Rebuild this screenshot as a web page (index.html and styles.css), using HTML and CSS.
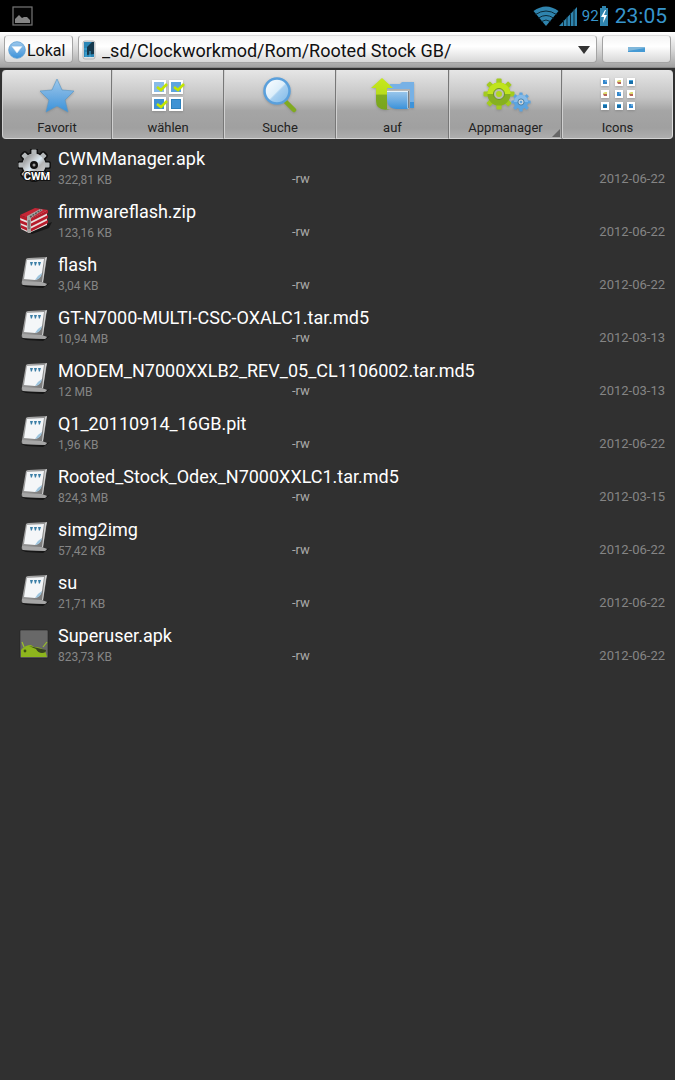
FILE: index.html
```html
<!DOCTYPE html>
<html lang="de">
<head>
<meta charset="utf-8">
<meta name="viewport" content="width=device-width, initial-scale=1">
<title>Dateimanager</title>
<link rel="stylesheet" href="styles.css">
</head>
<body>
<svg class="defs" width="0" height="0" aria-hidden="true">
  <defs>
    <linearGradient id="blue" x1="0" y1="0" x2="0" y2="1"><stop offset="0" stop-color="#9cc8ec"/><stop offset=".5" stop-color="#6fade2"/><stop offset="1" stop-color="#3a92da"/></linearGradient>
    <linearGradient id="green" x1="0" y1="0" x2="0" y2="1"><stop offset="0" stop-color="#c6ea1c"/><stop offset=".5" stop-color="#b9dc1c"/><stop offset=".55" stop-color="#80ac20"/><stop offset="1" stop-color="#78a41c"/></linearGradient>
    <linearGradient id="steel" x1="0" y1="0" x2="1" y2="1"><stop offset="0" stop-color="#777"/><stop offset=".35" stop-color="#c4c8cb"/><stop offset=".5" stop-color="#dceaf4"/><stop offset=".65" stop-color="#b4b4b4"/><stop offset="1" stop-color="#ddd"/></linearGradient>
    <linearGradient id="frame" x1="0" y1="0" x2="1" y2="1"><stop offset="0" stop-color="#b4b4b4"/><stop offset="1" stop-color="#6c6c6c"/></linearGradient>
    <linearGradient id="glass" x1="0" y1="0" x2="1" y2="1"><stop offset="0" stop-color="#fff"/><stop offset=".5" stop-color="#dceefa"/><stop offset=".55" stop-color="#a8d0f0"/><stop offset="1" stop-color="#7cb8e8"/></linearGradient>
    <g id="teeth">
      <rect x="-2.6" y="-15.500" width="5.2" height="31" rx="1"/>
      <rect x="-2.6" y="-15.500" width="5.2" height="31" rx="1" transform="rotate(45)"/>
      <rect x="-2.6" y="-15.500" width="5.2" height="31" rx="1" transform="rotate(90)"/>
      <rect x="-2.6" y="-15.500" width="5.2" height="31" rx="1" transform="rotate(135)"/>
      <circle r="11.500"/>
    </g>
    <symbol id="doc" viewBox="0 0 34 34">
      <path d="M3 30 24 31 32 28 25 33 8 32Z" fill="#161616"/>
      <path d="M8 4Q9 3 11 3L29 2 25 28 29 29 27 31 5 30Q3 29 4 26Z" fill="url(#frame)"/>
      <path d="M4 26 24 27 29 29 27 31 5 30Z" fill="#a6a6a6"/>
      <path d="M29 2 28 6 25 27 24 27 27 3Z" fill="#d2d2d2"/>
      <path d="M9 5 26 4 24 18Q22 24 17 25L6 24Z" fill="#f4f6f8"/>
      <path d="M24 18Q20 20 17 25Q23 24 24 18Z" fill="#9cc4de"/>
      <path d="M12 7h3l-1 3-1 1ZM16 7h3l-1 3-1 1ZM20 7h3l-1 3-1 1Z" fill="#3b7ea6"/>
    </symbol>
    <symbol id="tile-a" viewBox="0 0 8 8"><path d="M0 0h8v8H0Z" fill="#fff"/><path d="M2 2h4v4H2Z" fill="#3487cc"/><path d="M4 2h2v2H4Z" fill="#68abe0"/></symbol>
    <symbol id="tile-b" viewBox="0 0 8 8"><path d="M0 0h8v8H0Z" fill="#fff"/><path d="M2 3 4 2h2v2H2Z" fill="#dddc72"/><path d="M2 4h4v2H3Z" fill="#b56458"/></symbol>
    <symbol id="tile-c" viewBox="0 0 8 8"><path d="M0 0h8v8H0Z" fill="#fff"/><path d="M2 2h4v4H2Z" fill="#176ea8"/><path d="M2 2h4v1H2Z" fill="#49a6dd"/></symbol>
  </defs>
</svg>

<header class="status">
  <svg class="status-shot" viewBox="0 0 22 20" role="img" aria-label="Screenshot"><rect x="1" y="1" width="19" height="18" fill="#050505" stroke="#777" stroke-width="1.200"/><path d="M3 17v-4l4-4 3 3 2-1 3 0 3 3v3Z" fill="#858585"/></svg>
  <div class="status-right">
    <svg class="wifi" viewBox="0 0 26 20" role="img" aria-label="WLAN"><path d="M0.500 5Q13-4 25.500 5L13 20Z" fill="#2f84ae"/><path d="M2.500 8.500Q13 1.500 23.500 8.500M5.500 12Q13 7 20.500 12M8.500 15.500Q13 12.500 17.500 15.500" fill="none" stroke="#0b2a38" stroke-width="1"/></svg>
    <svg class="signal" viewBox="0 0 18 20" role="img" aria-label="Signal"><path d="M0 20 18 1V20Z" fill="#2f84ae"/><path d="M4.500 14v6M8 11v9M11.500 7v13M15 3v17" stroke="#0b2a38" stroke-width="1"/></svg>
    <span class="percent">92</span>
    <svg class="battery" viewBox="0 0 8 20" role="img" aria-label="Akku lädt"><path d="M2 0h4v2h2v18H0V2h2Z" fill="#2f84ae"/><path d="M5 4 1 11h3L3 17 7 9H4L6 4Z" fill="#fff"/></svg>
    <time class="clock">23:05</time>
  </div>
</header>

<nav class="pathbar">
  <button class="plate local" type="button"><svg class="local-icon" viewBox="0 0 18 18" aria-hidden="true"><circle cx="9" cy="9" r="8.300" fill="url(#blue)" stroke="#5a9dd0" stroke-width=".8"/><path d="M4 5.500h10L9 12Z" fill="#fff" stroke="#d6e6f2" stroke-width=".6"/></svg>Lokal</button>
  <label class="plate path">
    <svg class="phone" viewBox="0 0 14 20" aria-hidden="true"><rect x="1" y="1" width="12" height="18" rx="2" fill="#dde2e6" stroke="#aaa" stroke-width=".8"/><rect x="2" y="2" width="10" height="15" fill="#2a86b6"/><path d="M5 15V7l5-5h2v12Z" fill="#15384c"/><path d="M2 9h3M4 12v5M8 11v6" stroke="#45b0e0" stroke-width="1"/></svg>
    <select class="path-select" aria-label="Pfad"><option>_sd/Clockworkmod/Rom/Rooted Stock GB/</option></select>
    <svg class="arrow" viewBox="0 0 12 8" aria-hidden="true"><path d="M0 0h12L6 8Z" fill="#333"/></svg>
  </label>
  <button class="plate minus" type="button" aria-label="Leiste ausblenden"><svg class="minus-icon" viewBox="0 0 17 5" aria-hidden="true"><path d="M0 0h17v5H0Z" fill="#459ad4"/><path d="M0 0h17v1L0 4Z" fill="#80b7da"/></svg></button>
</nav>

<nav class="tools">
  <button class="tool" type="button"><svg class="tool-icon" viewBox="0 0 40 40" aria-hidden="true"><path d="M20 3 25 14 37 15 28 24 31 36 20 30 9 36 12 24 3 15 15 14Z" fill="url(#blue)" stroke="#5595c6" stroke-width=".6"/></svg>Favorit</button>
  <button class="tool" type="button"><svg class="tool-icon" viewBox="0 0 40 40" aria-hidden="true"><g fill="#5da5df" stroke="#fff" stroke-width="2"><rect x="5" y="5" width="12" height="12" fill="#88bce8"/><rect x="22" y="5" width="12" height="12"/><rect x="5" y="22" width="12" height="12" fill="#3f91d2"/><rect x="22" y="22" width="12" height="12" fill="#2d81bd"/></g><path d="M24 24h8v8h-8Z" fill="#3f93d4"/><path d="m9 11 4 3 6-6M26 11l4 3 6-6M9 28l4 3 6-6" fill="none" stroke="#c3e500" stroke-width="2.600"/></svg>wählen</button>
  <button class="tool" type="button"><svg class="tool-icon" viewBox="0 0 40 40" aria-hidden="true"><path d="m25 25 9 9" stroke="#80aa20" stroke-width="4.500" stroke-linecap="round"/><circle cx="17" cy="15" r="12.500" fill="url(#glass)" stroke="#5aa0dc" stroke-width="2.500"/></svg>Suche</button>
  <button class="tool" type="button"><svg class="tool-icon wide" viewBox="0 0 50 40" aria-hidden="true"><path d="M20 11 22 8h10l2-2h12v26h-4V13H20Z" fill="#77b1e5"/><path d="M42 26h4v6h-4Z" fill="#3d93da"/><path d="M3 12 14 2 25 12H19V33h4Q8 36 8 25V12Z" fill="url(#green)"/><path d="M19 15h21v18H29Q19 33 19 22Z" fill="url(#blue)"/><path d="M19 15.500h21v17" fill="none" stroke="#e7f3fa" stroke-width="1"/><path d="M40.500 15v17" stroke="#777e84"/></svg>auf</button>
  <button class="tool more" type="button"><svg class="tool-icon wide" viewBox="0 0 50 40" aria-hidden="true"><g transform="translate(18 18)"><use href="#teeth" fill="#a3cb20"/><path d="M-11.500 0A11.500 11.500 0 0 1 11.500 0Z" fill="#c0e41d"/><path d="M-11.500 0A11.500 11.500 0 0 0 11.500 0Z" fill="#86b020"/><circle r="5.500" fill="#b9bcb4" stroke="#6b9320"/><circle r="3" fill="#b0d61e"/></g><g fill="#5ca4df" transform="translate(40 26) scale(.62)"><use href="#teeth"/><path d="M-11.500 0A11.500 11.500 0 0 1 11.500 0Z" fill="#86bbe8"/><circle r="5" fill="#ccd5dc" stroke="#477c9f" stroke-width="1.500"/><circle r="2" fill="#5ca4df"/></g></svg>Appmanager</button>
  <button class="tool" type="button"><svg class="tool-icon" viewBox="0 0 40 40" aria-hidden="true"><use href="#tile-a" x="3" y="2" width="8" height="8"/><use href="#tile-b" x="17" y="2" width="8" height="8"/><use href="#tile-c" x="29" y="2" width="8" height="8"/><use href="#tile-b" x="3" y="14" width="8" height="8"/><use href="#tile-a" x="17" y="14" width="8" height="8"/><use href="#tile-b" x="29" y="14" width="8" height="8"/><use href="#tile-c" x="3" y="26" width="8" height="8"/><use href="#tile-c" x="17" y="26" width="8" height="8"/><use href="#tile-a" x="29" y="26" width="8" height="8"/></svg>Icons</button>
</nav>

<main>
<ul class="files">
  <li class="file"><svg class="file-icon" viewBox="0 0 34 34" aria-hidden="true"><g transform="translate(16 16)"><use href="#teeth" fill="#111" stroke="#111" stroke-width="3"/><use href="#teeth" fill="#b4b8ba"/><circle r="11" fill="url(#steel)"/><circle r="4" fill="#111"/><circle r="1.500" fill="#999"/></g><text class="cwm" x="19" y="31" text-anchor="middle">CWM</text></svg><a class="name" href="#">CWMManager.apk</a><span class="size">322,81 KB</span><span class="perm">-rw</span><span class="date">2012-06-22</span></li>
  <li class="file"><svg class="file-icon" viewBox="0 0 34 34" aria-hidden="true"><path d="M10 31 29 22 34 20 31 26 14 32Z" fill="#171717"/><path d="M2 14 12 17 29 8V23L11 31 3 27Z" fill="#eadfdf"/><path d="M2 13 17 6 30 8 12 17Z" fill="#c52535"/><path d="M2 13 12 17V20L2 16ZM2 18 12 22V25L2 21ZM3 23 12 27V30L3 26ZM12 17 30 8V11L12 20ZM12 22 30 13V16L12 25ZM12 27 30 18V21L12 30Z" fill="#b61c2b"/><path d="M9 14 22 7 25 8 13 16V31L9 30Z" fill="#aaa6a3"/><path d="m12 15 11-7" stroke="#555" stroke-width="1.500" stroke-dasharray="2 1"/><path d="M11 18v9" stroke="#555"/></svg><a class="name" href="#">firmwareflash.zip</a><span class="size">123,16 KB</span><span class="perm">-rw</span><span class="date">2012-06-22</span></li>
  <li class="file"><svg class="file-icon" aria-hidden="true"><use href="#doc"/></svg><a class="name" href="#">flash</a><span class="size">3,04 KB</span><span class="perm">-rw</span><span class="date">2012-06-22</span></li>
  <li class="file"><svg class="file-icon" aria-hidden="true"><use href="#doc"/></svg><a class="name" href="#">GT-N7000-MULTI-CSC-OXALC1.tar.md5</a><span class="size">10,94 MB</span><span class="perm">-rw</span><span class="date">2012-03-13</span></li>
  <li class="file"><svg class="file-icon" aria-hidden="true"><use href="#doc"/></svg><a class="name" href="#">MODEM_N7000XXLB2_REV_05_CL1106002.tar.md5</a><span class="size">12 MB</span><span class="perm">-rw</span><span class="date">2012-03-13</span></li>
  <li class="file"><svg class="file-icon" aria-hidden="true"><use href="#doc"/></svg><a class="name" href="#">Q1_20110914_16GB.pit</a><span class="size">1,96 KB</span><span class="perm">-rw</span><span class="date">2012-06-22</span></li>
  <li class="file"><svg class="file-icon" aria-hidden="true"><use href="#doc"/></svg><a class="name" href="#">Rooted_Stock_Odex_N7000XXLC1.tar.md5</a><span class="size">824,3 MB</span><span class="perm">-rw</span><span class="date">2012-03-15</span></li>
  <li class="file"><svg class="file-icon" aria-hidden="true"><use href="#doc"/></svg><a class="name" href="#">simg2img</a><span class="size">57,42 KB</span><span class="perm">-rw</span><span class="date">2012-06-22</span></li>
  <li class="file"><svg class="file-icon" aria-hidden="true"><use href="#doc"/></svg><a class="name" href="#">su</a><span class="size">21,71 KB</span><span class="perm">-rw</span><span class="date">2012-06-22</span></li>
  <li class="file"><svg class="file-icon" viewBox="0 0 34 34" aria-hidden="true"><rect x="2" y="4" width="28" height="28" rx="1" fill="#686868" stroke="#222" stroke-width=".6"/><path d="M3 31V24Q7 19 13 19L16 21Q27 20 29 31Z" fill="#8db51d"/><path d="m6 21-2-5M25 21l4-5" stroke="#9bc229" stroke-width="1.200"/><path d="m11 20 17 4q0 3-4 3-4 0-6-4Z" fill="#384520"/><circle cx="7" cy="25" r="1.400" fill="#3f5214"/></svg><a class="name" href="#">Superuser.apk</a><span class="size">823,73 KB</span><span class="perm">-rw</span><span class="date">2012-06-22</span></li>
</ul>
</main>
</body>
</html>
```
FILE: styles.css
```css
* { box-sizing: border-box; }
body {
  margin: 0;
  min-height: 100vh;
  background: #303030;
  color: #fff;
  font-family: Roboto, "Noto Sans", sans-serif;
}
svg { display: block; flex: none; }
button, select { font: inherit; color: inherit; margin: 0; }
.defs { position: absolute; }

.status {
  display: flex;
  align-items: center;
  justify-content: space-between;
  height: 32px;
  padding: 0 8px 0 12px;
  background: #000;
  color: #3795cc;
}
.status-shot { width: 22px; height: 20px; }
.status-right { display: flex; align-items: center; }
.wifi { width: 26px; height: 20px; }
.signal { width: 18px; height: 20px; margin-right: 5px; }
.percent { font-size: 15px; }
.battery { width: 8px; height: 20px; margin: 0 7px 0 1px; }
.clock { font-size: 21px; line-height: 32px; }

.pathbar {
  display: flex;
  gap: 5px;
  height: 36px;
  padding: 3px 4px 4px;
  background: linear-gradient(#fff, #d8d8d8 50%, #a2a2a2);
  border-bottom: 1px solid #888;
  color: #111;
}
.plate {
  display: flex;
  align-items: center;
  border: 1px solid #a4a4a4;
  border-top-color: #ddd;
  border-radius: 4px;
  background: linear-gradient(#f4f4f4, #fff 40%, #d8d8d8);
}
.local { width: 69px; padding: 2px 3px 0; gap: 1px; font-size: 16px; }
.local-icon { width: 18px; height: 18px; }
.path { flex: 1; min-width: 0; padding: 2px 6px 0 3px; font-size: 18px; }
.phone { width: 14px; height: 20px; margin-right: 6px; }
.path-select {
  flex: 1;
  min-width: 0;
  padding: 0;
  border: 0;
  background: transparent;
  appearance: none;
}
.arrow { width: 12px; height: 8px; pointer-events: none; }
.minus { width: 69px; justify-content: center; padding: 0; }
.minus-icon { width: 17px; height: 5px; }

.tools {
  display: grid;
  grid-template-columns: 110fr 112fr 112fr 113fr 113fr 111fr;
  margin-top: 2px;
  padding: 0 2px;
}
.tool {
  position: relative;
  display: flex;
  flex-direction: column;
  align-items: center;
  gap: 3px;
  height: 69px;
  padding: 6px 0 0;
  border: 0;
  border-right: 1px solid #777;
  border-left: 1px solid #d0d0d0;
  border-bottom: 1px solid #d2d2d2;
  background: linear-gradient(#e6e6e6, #c4c4c4 40%, #a5a5a5 60%, #a0a0a0 85%, #adadad);
  color: #222;
  font-size: 13px;
  line-height: 18px;
}
.tool:first-child { border-radius: 4px 0 0 4px; }
.tool:last-child { border-radius: 0 4px 4px 0; border-right-color: #ddd; }
.tool-icon { width: 40px; height: 40px; filter: drop-shadow(0 1px 1px #7778); }
.wide { width: 50px; }
.more::after {
  content: "";
  position: absolute;
  right: 1px;
  bottom: 1px;
  border: 4px solid transparent;
  border-right-color: #666;
  border-bottom-color: #666;
}

.files { margin: 0; padding: 8px 0 0; list-style: none; }
.file {
  display: grid;
  grid-template-columns: 34px 228px 1fr auto;
  grid-template-rows: 24px 16px;
  column-gap: 6px;
  height: 53px;
  padding: 0 10px 0 18px;
  color: #858585;
  font-size: 13px;
  line-height: 16px;
}
.file-icon { grid-row: 1 / 3; width: 34px; height: 34px; margin-top: 2px; }
.name {
  grid-column: 2 / 5;
  color: #fff;
  font-size: 18px;
  line-height: 24px;
  text-decoration: none;
  overflow-wrap: anywhere;
}
.size { font-size: 12px; line-height: 18px; }
.perm { color: #aaa; }
.cwm {
  fill: #fff;
  stroke: #111;
  stroke-width: 2px;
  paint-order: stroke;
  font-size: 11px;
  font-weight: 700;
}
```
